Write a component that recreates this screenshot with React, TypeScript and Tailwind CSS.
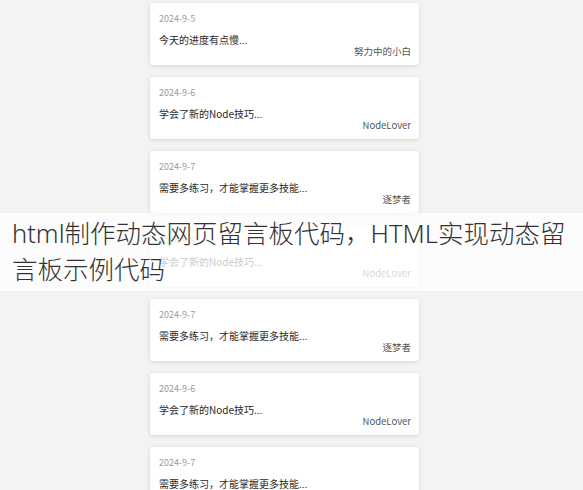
const messages = [
  { date: "2024-9-5", text: "今天的进度有点慢...", author: "努力中的小白" },
  { date: "2024-9-6", text: "学会了新的Node技巧...", author: "NodeLover" },
  { date: "2024-9-7", text: "需要多练习，才能掌握更多技能...", author: "逐梦者" },
  { date: "2024-9-6", text: "学会了新的Node技巧...", author: "NodeLover" },
  { date: "2024-9-7", text: "需要多练习，才能掌握更多技能...", author: "逐梦者" },
  { date: "2024-9-6", text: "学会了新的Node技巧...", author: "NodeLover" },
  { date: "2024-9-7", text: "需要多练习，才能掌握更多技能...", author: "逐梦者" },
];

function MessageCard({ date, text, author }: { date: string; text: string; author: string }) {
  return (
    <div className="h-[62px] shrink-0 rounded-[3px] bg-white pl-[9px] pr-[8px] pt-[9px] shadow-[0_1px_4px_rgba(0,0,0,0.13)] flex flex-col">
      <div className="text-[9px] leading-[13px] text-[#9a9a9a]">{date}</div>
      <div className="mt-[8px] text-[10px] leading-[14px] text-[#2a2a2a]">{text}</div>
      <div className="-mt-[2px] text-right text-[9.5px] leading-[12px] text-[#555]">{author}</div>
    </div>
  );
}

export default function App() {
  return (
    <div
      className="relative h-[490px] w-[583px] overflow-hidden bg-[#f3f3f3]"
      style={{ fontFamily: '"Noto Sans CJK SC", "Noto Sans", sans-serif' }}
    >
      <div className="ml-[150px] flex w-[269px] flex-col gap-[12px] pt-[3px]">
        {messages.map((m, i) => (
          <MessageCard key={i} {...m} />
        ))}
      </div>

      {/* title banner over the list */}
      <div className="absolute left-0 right-0 top-[213px] h-[78px] bg-white/75 px-[12px] pt-[2px]">
        <p
          className="text-[25.5px] font-light leading-[36px] text-[#333]"
          style={{ fontFamily: '"Noto Sans", "Noto Sans CJK SC", sans-serif' }}
        >
          html制作动态网页留言板代码，HTML实现动态留言板示例代码
        </p>
      </div>
    </div>
  );
}
